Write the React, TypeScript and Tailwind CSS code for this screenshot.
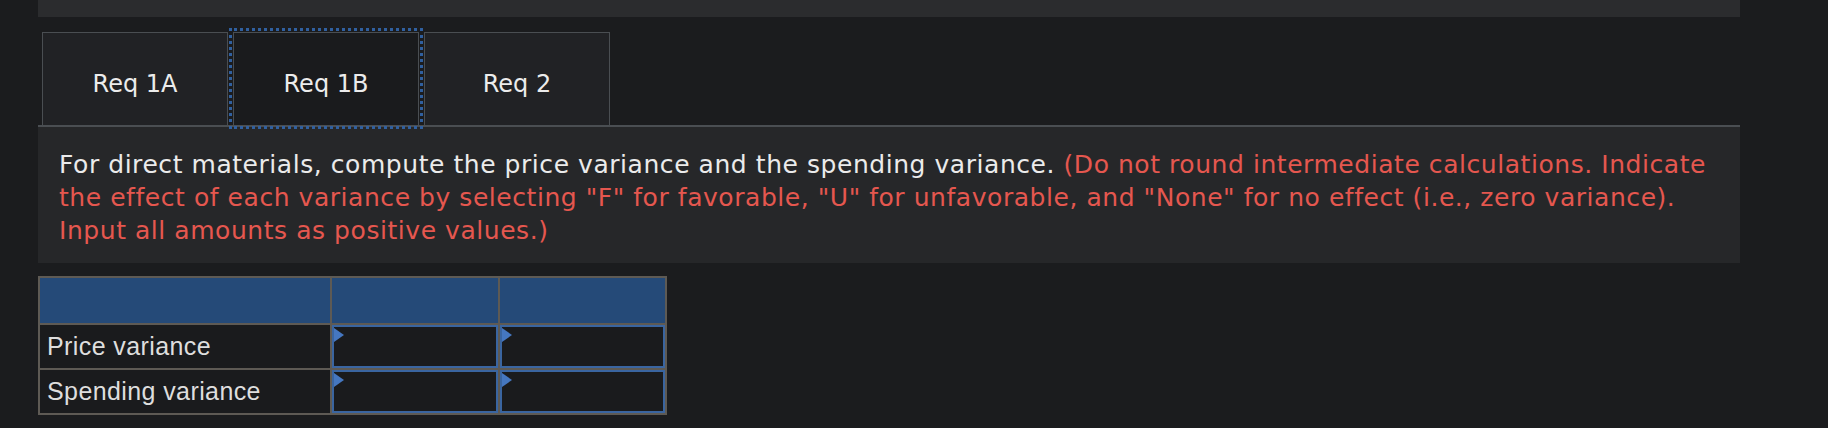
const tabs = ["Req 1A", "Req 1B", "Req 2"];
const rows = ["Price variance", "Spending variance"];

function InputCell() {
  return (
    <td className="border-2 border-[#5e5a54] p-0 align-top">
      <div className="relative h-[43px] w-full border-2 border-[#3a65a0] bg-[#1a1b1d]">
        <span className="absolute left-0 top-[1px] h-0 w-0 border-y-[7px] border-l-[10px] border-y-transparent border-l-[#4577c0]" />
      </div>
    </td>
  );
}

export default function App() {
  return (
    <div className="h-[428px] w-full overflow-hidden bg-[#1b1c1e]">
      <div className="ml-[38px] w-[1702px]">
        {/* top strip */}
        <div className="h-[17px] bg-[#2b2c2e]" />

        {/* tabs */}
        <div className="mt-[15px] flex gap-[5px] border-b-2 border-[#4a4e52] pl-[4px]">
          {tabs.map((t, i) => (
            <div
              key={t}
              className={
                i === 1
                  ? "flex h-[93px] w-[186px] items-center justify-center border border-b-0 border-[#4a4e52] bg-[#1a1b1d] text-[#ececec] outline-[3px] outline-offset-[1px] outline-[#3060a0] outline-dotted"
                  : "flex h-[93px] w-[186px] items-center justify-center border border-b-0 border-[#4a4e52] bg-[#212225] text-[#ececec]"
              }
              style={{ fontFamily: '"DejaVu Sans", sans-serif' }}
            >
              <span className="pt-[10px] text-[24px]">{t}</span>
            </div>
          ))}
        </div>

        {/* instructions */}
        <div
          className="bg-[#262729] px-[21px] pb-[16px] pt-[21px] text-[25px] leading-[33px] tracking-[0.55px]"
          style={{ fontFamily: '"DejaVu Sans", sans-serif' }}
        >
          <span className="text-[#ebebeb]">
            For direct materials, compute the price variance and the spending variance.
          </span>{" "}
          <span className="text-[#e5574f]">
            (Do not round intermediate calculations. Indicate
            <br />
            the effect of each variance by selecting "F" for favorable, "U" for unfavorable, and
            "None" for no effect (i.e., zero variance).
            <br />
            Input all amounts as positive values.)
          </span>
        </div>

        {/* answer table */}
        <table
          className="mt-[13px] w-[629px] border-collapse border-2 border-[#5e5a54]"
          style={{ fontFamily: '"Liberation Sans", Arial, sans-serif' }}
        >
          <tbody>
            <tr className="h-[47px] bg-[#254a78]">
              <td className="w-[293px] border-2 border-[#5e5a54]" />
              <td className="w-[168px] border-2 border-[#5e5a54]" />
              <td className="w-[168px] border-2 border-[#5e5a54]" />
            </tr>
            {rows.map((r) => (
              <tr key={r}>
                <td className="border-2 border-[#5e5a54] bg-[#1a1b1d] pl-[7px] text-[25px] tracking-[0.4px] text-[#dedede]">
                  {r}
                </td>
                <InputCell />
                <InputCell />
              </tr>
            ))}
          </tbody>
        </table>
      </div>
    </div>
  );
}
